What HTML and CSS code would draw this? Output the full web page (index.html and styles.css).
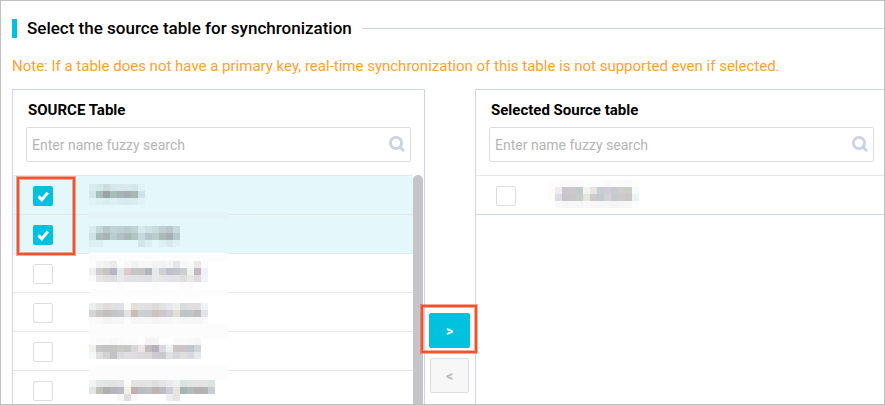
FILE: index.html
```html
<!DOCTYPE html>
<html lang="en">
<head>
    <meta charset="UTF-8">
    <meta name="viewport" content="width=device-width, initial-scale=1.0">
    <title>Select the source table for synchronization</title>
    <link rel="stylesheet" href="styles.css">
</head>
<body>

    <main class="page">
        <header class="section-title">
            <h1>Select the source table for synchronization</h1>
        </header>

        <p class="note">Note: If a table does not have a primary key, real-time synchronization of this table is not supported even if selected.</p>

        <div class="transfer">
            <section class="panel">
                <h2>SOURCE Table</h2>
                <div class="search">
                    <input type="text" placeholder="Enter name fuzzy search" aria-label="Search source tables">
                    <svg class="search-icon" viewBox="0 0 16 16"><circle cx="7" cy="7" r="5.6"/><path d="M11 11.2l3.2 3"/></svg>
                </div>
                <div class="list">
                    <div class="rows" id="sourceRows"></div>
                    <div class="scrollbar"></div>
                    <div class="highlight highlight-rows"></div>
                </div>
            </section>

            <div class="actions">
                <button class="btn btn-primary" aria-label="Add">&gt;</button>
                <button class="btn" aria-label="Remove" disabled>&lt;</button>
                <div class="highlight highlight-add"></div>
            </div>

            <section class="panel">
                <h2>Selected Source table</h2>
                <div class="search">
                    <input type="text" placeholder="Enter name fuzzy search" aria-label="Search selected tables">
                    <svg class="search-icon" viewBox="0 0 16 16"><circle cx="7" cy="7" r="5.6"/><path d="M11 11.2l3.2 3"/></svg>
                </div>
                <div class="list list-end">
                    <div class="rows" id="selectedRows"></div>
                </div>
            </section>
        </div>
    </main>

    <script src="script.js"></script>
</body>
</html>
```
FILE: styles.css
```css
:root {
    --accent: #00c1de;
    --line: #e6e7eb;
    --panel: #cfd3e6;
    --control: #dddddd;
    --selected: #e4f7fb;
    --note: #ffa12e;
    --mark: #f0532d;
}

* { margin: 0; padding: 0; box-sizing: border-box; }
body { font-family: Roboto, sans-serif; font-size: 15px; line-height: 20px; color: #000; background: #fff; }

.page {
    display: flex;
    flex-direction: column;
    height: 100vh;
    padding: 17px 0 0 11px;
    border: 1px solid #c0c0c0;
    overflow: hidden;
}

/* title */
.section-title { display: flex; align-items: center; gap: 10px; }
.section-title::before { content: ""; width: 5px; height: 19px; background: var(--accent); }
.section-title::after { content: ""; flex: 1; height: 1px; background: var(--panel); }
.section-title h1 { font-size: 17px; font-weight: 500; line-height: 20px; }

.note { margin: 18px 0 13px; color: var(--note); white-space: nowrap; }

/* transfer */
.transfer {
    flex: 1;
    display: grid;
    grid-template-columns: 1fr 50px 1fr;
    margin-right: -4px;
    min-height: 0;
}

.panel { border: 1px solid var(--panel); border-bottom: none; min-width: 0; }
.panel h2 { padding: 10px 15px 7px; font-size: 15px; font-weight: 700; line-height: 20px; }

.search { position: relative; margin: 0 13px 13px; }
.search input {
    display: block;
    width: 100%;
    height: 35px;
    padding: 0 32px 0 5px;
    border: 1px solid var(--control);
    border-radius: 2px;
    font: inherit;
    font-size: 14px;
    outline: none;
}
.search input::placeholder { color: #b5b5b5; opacity: 1; }
.search-icon {
    position: absolute;
    right: 6px;
    top: 9px;
    width: 16px;
    height: 16px;
    fill: none;
    stroke: #ccd1e6;
    stroke-width: 2.8;
    stroke-linecap: round;
}

/* rows */
.list { position: relative; display: flex; }
.list-end { border-bottom: 1px solid var(--panel); }
.rows { flex: 1; }
.row {
    display: flex;
    align-items: center;
    gap: 36px;
    height: 39px;
    padding-left: 20px;
    border-top: 1px solid var(--line);
}
.list-end .row { gap: 32px; }
.row.checked { background: var(--selected); }
.row svg { width: 139px; height: 39px; margin-top: -1px; }

.row input {
    appearance: none;
    width: 20px;
    height: 20px;
    margin-top: 2px;
    border: 1px solid var(--control);
    border-radius: 2px;
    background: #fff;
}
.row input:checked {
    border-color: var(--accent);
    background: var(--accent) url("data:image/svg+xml,%3Csvg xmlns='http://www.w3.org/2000/svg' viewBox='0 0 18 18'%3E%3Cpath d='M4.6 9.4l3.2 3.4L13.8 5.6' fill='none' stroke='white' stroke-width='3'/%3E%3C/svg%3E");
}

.scrollbar { width: 10px; margin-right: 1px; border-radius: 5px; background: #c4c4c9; }

/* buttons */
.actions { position: relative; display: flex; flex-direction: column; align-items: center; gap: 10px; padding: 224px 1px 0 0; }
.btn {
    width: 39px;
    height: 35px;
    border: 1px solid var(--control);
    border-radius: 2px;
    background: #f7f7f7;
    color: #bbb;
    font: 700 14px/20px Roboto, sans-serif;
}
.btn-primary { width: 41px; border-color: var(--accent); background: var(--accent); color: #fff; }

/* red marks */
.highlight { position: absolute; border: 2px solid var(--mark); box-shadow: 0 0 0 1px #f5532d80, inset 0 0 0 1px #f5532d80; pointer-events: none; }
.highlight-rows { left: 4px; top: 2px; width: 58px; height: 78px; }
.highlight-add { left: -4px; top: 216px; width: 56px; height: 48px; }
```
FILE: script.js
```javascript
// Masked table names: 7px cells, y is the first line of cells
// bands are the pale strips [y, height] above and below the name
const sourceTables = [
    { checked: true, y: 9, base: 'none', band: '#e4f3f7', bands: [[37, 2]], cells: [
        'd8ecef d2e7ea cadee1 d4e8eb d7e9ec d7e9ec d5e7ea e0f3f6',
        'd2e7e7 a9bebb 9aa5a3 a9bdbb a5b4b9 a4aeb3 a6b7b5 cfe2e5',
        'dff4f7 dbf1f5 d6edf1 dcf1f5 d8edf1 d6ecf0 d8edf1 def3f6'] },
    { checked: true, y: 12, base: '#e4f7fb', band: '#e4f3f7', bands: [[0, 5]], cells: [
        'd9edf0 c5d8da b8c8c9 c1d3d5 bdd0d3 bacccf bfd2d4 d5e8ec cfe1e4 c7dade bfd0d4 b9c8cd c7d9df',
        'd0e2e4 abbbbb a8b5b4 bacdcd b0c0c3 a8b8b7 b2c3c3 c6dade b4c6cb bccdce abb9ba a6b0b3 b8c7ce',
        'dbf0f2 dcf0f2 - - - - - d2e6e9 dbeff2 - dbf0f2 d6eaed dff1f4'] },
    { y: 8, base: '#fff', band: '#fcfcfc', bands: [[1, 7], [36, 3]], cells: [
        'fdfdfd f4f4f5 f2f2f3 eaeaec fefefe f7f7f8 f2f2f2 f6f6f6 f7f7f7 f3f3f3 f2f2f4 f5f5f5 e4e8ec f8f8f8 fafafa eee9e9 fafcfd',
        'f0f0f0 cdcccf c6c4c3 b8b6c0 e3e8e9 d9cccb c6c6c6 c5c5c5 b3b5bd e5e9e9 cfd0d3 c0c0ca c4c4c8 cbcfd0 f0f1ee c0bac0 eef2f5',
        'fafafa e5e5e6 e3dfe0 dedde2 e9eaed e4e2e4 e3e2e5 e1e1e3 dedfe4 e6e8e9 e5e5e7 e2e2e8 e3e3e8 dfdedd e8e8e8 dfdbdd eff2f6',
        '- - - - fbfbfb - - - - fcfcfc - - - fbfbfb fbfbfb - -'] },
    { y: 11, base: '#fff', band: '#fcfcfc', bands: [[0, 4], [32, 7]], cells: [
        'ebeeec e5e5e5 dfdcda e0e0e0 e0e1e4 f9fbfa e3e0dc e1e1e1 e1e1e1 dedada e2e2e2 e7e8ec efefec d7dcdc dfdfdf dfdfdf eff1f4',
        'd2d5d2 c8c7c6 c4bfbd c4c3c5 c9c7cc e3e4e2 c6beb7 cccfd2 cbced0 cbc3c1 cdc7cb cecdd8 e2dfd6 bec6c5 bfc6c5 c4bdbe e3e4e8',
        'fafafa f7f7f7 f5f3f3 f5f5f6 f6f6f7 fcfcfc f5f5f3 f6f6f6 f6f6f7 f5f3f3 f6f5f5 f6f6f8 f9f9f7 f4f5f5 f5f6f6 f5f5f5 f9f9fb'] },
    { y: 7, base: '#fff', band: '#fcfcfc', bands: [[0, 7], [35, 4]], cells: [
        'fdfdfd fafafa fafafa f7f7f7 fafafa fbfbfb fbfbfb fdfdfd f3f3f5 f4f4f5 fefefe fefefe fafafa fafafa f8f8f8 f6f6f6',
        'eff1ef c5c5c4 c3c3c3 c3c3c4 cbc9c7 c5c6c6 d9d6da e9e6e3 c4bdb9 b5b2bd d9d9df eef1f3 c8c7c6 c8c6c6 c0c5cb d1d5d8',
        'f7f8f8 dfdfdf d2d2d2 c2c2c4 dadada e0dee0 e0dcdf dad9dc dad9da cecad5 c9c9ce e0e1e3 d7d7d9 dfdfdf d8d9e1 e7e9e9'] },
    { y: 10, base: '#fff', band: '#fcfcfc', bands: [[0, 10]], cells: [
        'f2f3f2 e5e7e4 e2e3e3 e2e3e3 e4e5e6 fafafa e6e4e2 e4e4e4 e3e3e3 e0dfdf e4e4e4 eaebee eff1f1 dbe3e1 e2e5e5 e3e3e3 e3e4e5 dce3e3',
        'e2e6e3 bfc1b9 b3afac b6b4bc bbb9c1 f0f1ef bdb2ad b9bdc1 bbc0c5 c0b3b1 bebbc4 ccccda e5e5dc a5b5b2 afbcb9 b6b0b0 b4b4b7 c6cdd3',
        '- - - - f5f5f5 dedede f8f8f8 - - - - eeeef0 e5e5e4 - - - - -'] }
];

const selectedTables = [
    { y: 5, base: 'none', band: '#fcfcfc', bands: [], cells: [
        'fdfdfd fdfdfd fbfbfb fbfbfb fbfbfb fdfdfd fdfdfd fdfdfd f9f9fa fbfbfb fbfbfb f9fafa fdfdfd',
        'fdfcfa efecf0 c9c6cc cbc9cb c4cac9 f2f4f1 e8e4e1 c9cdcf cfccd2 c7cbcd cfcecf cecec9 f6fafa',
        'fdfcfa dfdce2 c7c4cd c9c8c8 c6cec9 e5e5df d0c9ca c2cacf d3d1d6 c4cacd cbcbcc c9cabf eaf3f6',
        '- f9f9fa f6f6f7 f6f6f6 f5f6f6 f9f9f9 f9f6f6 f5f6f7 f7f7f7 f5f5f6 f6f6f6 f7f7f5 fafcfd'] }
];

function maskedName(table) {
    let rects = `<rect width="139" height="39" fill="${table.base}"/>`;

    table.bands.forEach(([y, height]) => {
        rects += `<rect y="${y}" width="139" height="${height}" fill="${table.band}"/>`;
    });

    table.cells.forEach((line, i) => {
        line.split(' ').forEach((color, j) => {
            if (color === '-') return;
            rects += `<rect x="${j * 7}" y="${table.y + i * 7}" width="7" height="7" fill="#${color}"/>`;
        });
    });

    return `<svg viewBox="0 0 139 39" shape-rendering="crispEdges" aria-hidden="true">${rects}</svg>`;
}

function displayRows(id, tables) {
    document.getElementById(id).innerHTML = tables.map((table, i) => `
        <label class="row ${table.checked ? 'checked' : ''}">
            <input type="checkbox" aria-label="Table ${i + 1}" ${table.checked ? 'checked' : ''}>
            ${maskedName(table)}
        </label>
    `).join('');
}

displayRows('sourceRows', sourceTables);
displayRows('selectedRows', selectedTables);
```
